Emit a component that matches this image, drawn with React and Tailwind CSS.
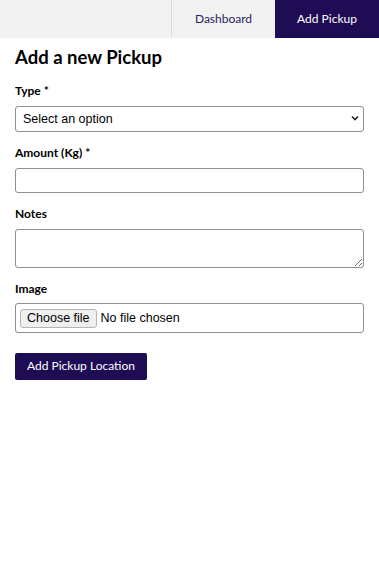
export default function App() {
  const brand = { fontFamily: "Lato, 'Noto Sans', sans-serif" };
  const sys = { fontFamily: "'Liberation Sans', Arial, sans-serif" };
  return (
    <div className="w-[379px] min-h-[573px] bg-white text-black" style={brand}>
      <nav className="flex h-[38px] bg-[#f2f1f1] justify-end">
        <a className="w-[104px] flex items-center justify-center border-l border-[#dcdcdc] text-[12px] text-[#2a1d5a]">Dashboard</a>
        <a className="w-[104px] flex items-center justify-center bg-[#1e0d55] text-[12px] text-white">Add Pickup</a>
      </nav>
      <main className="px-[15px] pt-[6px]">
        <h1 className="text-[18.5px] font-bold leading-[26px]">Add a new Pickup</h1>
        <form className="mt-[13px] flex flex-col">
          <label className="text-[12px] font-bold leading-[16px]">Type *</label>
          <div className="relative mt-[6px]">
            <select className="w-full h-[26px] appearance-none rounded-[3px] border border-[#8f8f8f] bg-white pl-[7px] text-[12.5px] outline-none" style={sys}>
              <option>Select an option</option>
            </select>
            <svg className="absolute right-[5px] top-[10px]" width="8" height="6" viewBox="0 0 8 6">
              <path d="M1 1.5 L4 4.5 L7 1.5" fill="none" stroke="#222" strokeWidth="1.6" />
            </svg>
          </div>
          <label className="mt-[13px] text-[12px] font-bold leading-[16px]">Amount (Kg) *</label>
          <input className="mt-[7px] h-[25px] rounded-[3px] border border-[#8f8f8f] bg-white" />
          <label className="mt-[13px] text-[12px] font-bold leading-[16px]">Notes</label>
          <textarea className="mt-[7px] h-[39px] rounded-[3px] border border-[#8f8f8f] bg-white block" />
          <label className="mt-[13px] text-[12px] font-bold leading-[16px]">Image</label>
          <div className="mt-[6px] h-[30px] rounded-[3px] border border-[#8f8f8f] bg-white flex items-center pl-[4px] gap-[4px] text-[12.5px]" style={sys}>
            <span className="h-[19px] px-[6px] flex items-center rounded-[3px] border border-[#b5b5b5] bg-[#efefef]">Choose file</span>
            <span>No file chosen</span>
          </div>
          <div className="mt-[19px]">
            <button type="button" className="h-[27px] w-[132px] rounded-[2px] bg-[#1e0d55] text-white text-[12px]">Add Pickup Location</button>
          </div>
        </form>
      </main>
    </div>
  );
}
